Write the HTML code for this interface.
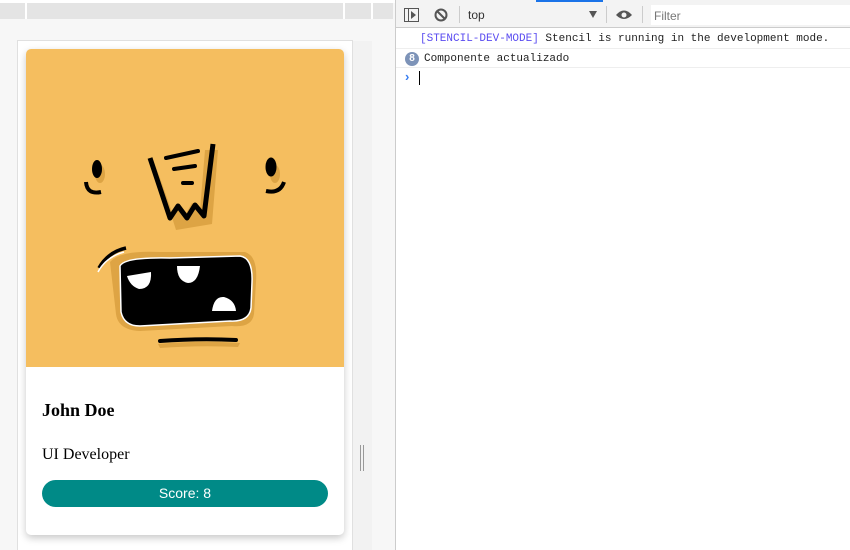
<!DOCTYPE html>
<html style="width:850px;height:550px;overflow:hidden"><head><meta charset="utf-8"><style>
*{margin:0;padding:0;box-sizing:border-box}
body{width:850px;height:550px;overflow:hidden;background:#fff;position:relative;font-family:"Liberation Sans",sans-serif}
.abs{position:absolute}
</style></head><body>
<div class="abs" style="left:0;top:0;width:395px;height:550px;background:#f7f7f7"></div>
<div class="abs" style="left:0;top:0;width:395px;height:3px;background:#fff"></div>
<div class="abs" style="left:0;top:3px;width:393px;height:16px;background:#e4e4e4"></div>
<div class="abs" style="left:25px;top:3px;width:2px;height:16px;background:#fff"></div>
<div class="abs" style="left:343px;top:3px;width:2px;height:16px;background:#fff"></div>
<div class="abs" style="left:371px;top:3px;width:2px;height:16px;background:#fff"></div>
<div class="abs" style="left:352px;top:41px;width:20px;height:509px;background:#f2f2f2"></div>
<div class="abs" style="left:17px;top:40px;width:336px;height:515px;background:#fff;border:1px solid #e0e0e0"></div>
<div class="abs" style="left:360px;top:445px;width:1px;height:26px;background:#999"></div>
<div class="abs" style="left:363px;top:445px;width:1px;height:26px;background:#999"></div>
<div class="abs" style="left:26px;top:49px;width:318px;height:486px;background:#fff;border-radius:5px;box-shadow:0 3px 8px rgba(0,0,0,.22);overflow:hidden">
 <svg width="318" height="318" style="display:block;background:#f5be5f" viewBox="26 49 318 318">
  <g fill="#d9a040" opacity=".85">
   <ellipse cx="100" cy="174" rx="5" ry="9"/><ellipse cx="275" cy="174" rx="5" ry="9"/>
   <path d="M155 164 L176 230 L212 224 L218 150 L205 150 L200 210 L192 203 L185 215 L178 205 L172 212 Z"/>
   <path d="M110 262 Q120 250 160 252 L245 252 Q258 256 256 282 L254 314 Q252 328 232 326 L140 331 Q118 330 116 314 Z"/>
   <path d="M158 344 Q200 340 240 343 L238 347 Q200 345 160 348Z"/>
  </g>
  <ellipse cx="97" cy="169" rx="5" ry="9" fill="#000"/>
  <path d="M86 182 Q87 195 101 192" stroke="#000" stroke-width="4" fill="none"/>
  <ellipse cx="271" cy="167" rx="5.5" ry="9.5" fill="#000"/>
  <path d="M266 191 Q280 194 284 182" stroke="#000" stroke-width="4" fill="none"/>
  <path d="M150 158 L170 218 L178 206 L187 218 L195 205 L204 216 L213 144" stroke="#000" stroke-width="5" fill="none" stroke-linejoin="round"/>
  <path d="M166 158 L198 151 M174 169 L195 166 M183 183 L192 183" stroke="#000" stroke-width="4" stroke-linecap="round"/>
  <path d="M99 268 Q108 252 126 248" stroke="#000" stroke-width="3.5" fill="none"/>
  <path d="M98 272 Q106 257 124 252" stroke="#fff" stroke-width="1.5" fill="none"/>
  <path d="M120 266 Q124 257 170 258 L240 256 Q253 258 252 282 L251 308 Q249 322 230 321 L140 326 Q124 326 121 312 Z" fill="#000" stroke="#fff" stroke-width="1.5"/>
  <path d="M127 276 L151 272 Q152 289 139 289 Q130 286 127 276Z" fill="#fff"/>
  <path d="M177 266 L200 266 Q198 283 188 283 Q177 281 177 266Z" fill="#fff"/>
  <path d="M212 311 Q214 296 224 297 Q235 300 236 311Z" fill="#fff"/>
  <path d="M160 341 Q200 338 236 340" stroke="#000" stroke-width="4" fill="none" stroke-linecap="round"/>
 </svg>
 <div class="abs" style="left:16px;top:351px;font:bold 18px 'Liberation Serif',serif;color:#000">John Doe</div>
 <div class="abs" style="left:16px;top:397px;font:16px 'Liberation Serif',serif;color:#000">UI Developer</div>
 <div class="abs" style="left:16px;top:431px;width:286px;height:27px;border-radius:14px;background:#008a87;color:#fff;font-size:14px;line-height:27px;text-align:center">Score: 8</div>
</div>
<div class="abs" style="left:395px;top:0;width:1px;height:550px;background:#ccc"></div>
<div class="abs" style="left:396px;top:0;width:454px;height:28px;background:#f3f3f3;border-bottom:1px solid #ccc"></div>
<div class="abs" style="left:536px;top:0;width:67px;height:2px;background:#1a73e8"></div>
<svg class="abs" style="left:396px;top:0" width="454" height="28">
 <rect x="8.5" y="8.5" width="14" height="13" fill="none" stroke="#555"/>
 <line x1="12.5" y1="9" x2="12.5" y2="21" stroke="#555"/>
 <path d="M15 11 L20 15 L15 19Z" fill="#555"/>
 <circle cx="45" cy="15" r="5.5" fill="none" stroke="#555" stroke-width="2"/>
 <line x1="41" y1="11" x2="49" y2="19" stroke="#555" stroke-width="2"/>
 <line x1="63.5" y1="6" x2="63.5" y2="23" stroke="#ccc"/>
 <path d="M193 11 L201 11 L197 18Z" fill="#555"/>
 <line x1="210.5" y1="6" x2="210.5" y2="23" stroke="#ccc"/>
 <path d="M220 15 Q228 6 236 15 Q228 23 220 15Z" fill="#555"/>
 <circle cx="228" cy="15" r="2.5" fill="#f3f3f3"/>
 <line x1="246.5" y1="6" x2="246.5" y2="23" stroke="#ccc"/>
 <rect x="255" y="5" width="199" height="20" fill="#fff"/>
</svg>
<div class="abs" style="left:468px;top:8px;font-size:12px;color:#333">top</div>
<div class="abs" style="left:654px;top:9px;font-size:12px;color:#777">Filter</div>
<div class="abs" style="left:396px;top:29px;width:454px;height:20px;border-bottom:1px solid #eee;font:11px 'Liberation Mono',monospace;line-height:21px;padding-left:24px;color:#222;white-space:pre"><span style="color:#5a4cf0">[STENCIL-DEV-MODE]</span> Stencil is running in the development mode.</div>
<div class="abs" style="left:396px;top:49px;width:454px;height:19px;border-bottom:1px solid #eee;font:11px 'Liberation Mono',monospace;line-height:21px;padding-left:28px;color:#222">Componente actualizado</div>
<div class="abs" style="left:405px;top:52px;width:14px;height:14px;border-radius:7px;background:#7d93b8;color:#fff;font:bold 10px 'Liberation Sans',sans-serif;line-height:14px;text-align:center">8</div>
<div class="abs" style="left:405px;top:69px;color:#367cf1;font:bold 13px 'Liberation Sans',sans-serif">›</div>
<div class="abs" style="left:419px;top:71px;width:1px;height:14px;background:#000"></div>
</body></html>
